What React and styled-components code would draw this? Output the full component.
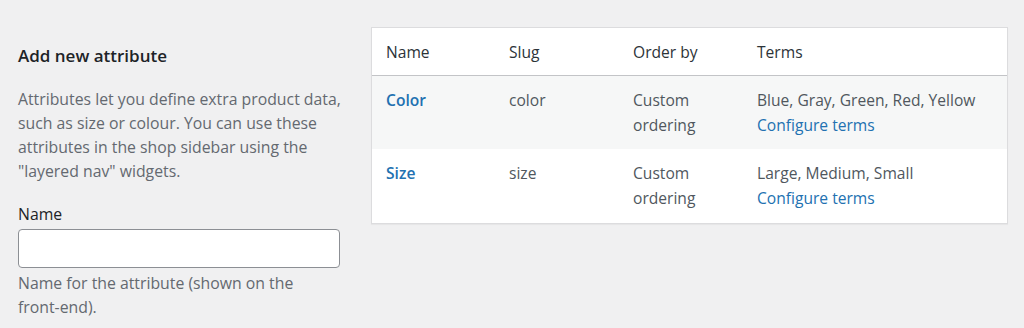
import React from 'react';
import styled, { createGlobalStyle } from 'styled-components';

const Global = createGlobalStyle`
  html, body { margin: 0; padding: 0; background: #f0f0f1; }
  body { font-family: "Open Sans", "Noto Sans", sans-serif; color: #3c434a; }
`;

const Page = styled.div`
  display: flex;
  align-items: flex-start;
  gap: 27px;
  padding: 27px 16px 0 18px;
  width: 1024px;
  height: 328px;
  box-sizing: border-box;
  overflow: hidden;
`;

const Side = styled.div`
  width: 326px;
  flex: none;
`;

const Heading = styled.h2`
  margin: 17px 0 0;
  font-size: 17px;
  font-weight: 600;
  line-height: 24px;
  color: #1d2327;
`;

const Note = styled.p`
  margin: ${p => p.$top || 0}px 0 0;
  font-size: 15.8px;
  line-height: 24px;
  color: #646970;
`;

const NoWrap = styled.span`
  white-space: nowrap;
`;

const Label = styled.label`
  display: block;
  margin-top: 19px;
  font-size: 15.8px;
  line-height: 24px;
  color: #1d2327;
`;

const Input = styled.input`
  display: block;
  box-sizing: border-box;
  width: 322px;
  height: 39px;
  margin-top: 3px;
  border: 1px solid #8c8f94;
  border-radius: 4px;
  background: #fff;
`;

const Table = styled.div`
  flex: 1;
  background: #fff;
  border: 1px solid #dcdcde;
  box-shadow: 0 1px 1px rgba(0, 0, 0, 0.04);
`;

const Row = styled.div`
  display: grid;
  grid-template-columns: 123px 124px 124px 1fr;
  padding: ${p => (p.$head ? '12px 14px 10px' : p.$alt ? '12px 14px 11px' : '12px 14px 12px')};
  background: ${p => (p.$alt ? '#f6f7f7' : '#fff')};
  border-bottom: ${p => (p.$head ? '1px solid #c3c4c7' : 'none')};
  font-size: 15.6px;
  line-height: 25px;
  color: ${p => (p.$head ? '#2c3338' : '#50575e')};
`;

const Cell = styled.div`
  padding-right: 8px;
`;

const Link = styled.a`
  color: #2271b1;
  text-decoration: none;
  font-weight: ${p => (p.$bold ? 600 : 400)};
  display: ${p => (p.$block ? 'block' : 'inline')};
`;

const rows = [
  { name: 'Color', slug: 'color', terms: 'Blue, Gray, Green, Red, Yellow' },
  { name: 'Size', slug: 'size', terms: 'Large, Medium, Small' },
];

export default function App() {
  return (
    <>
      <Global />
      <Page>
        <Side>
          <Heading>Add new attribute</Heading>
          <Note $top={19}>
            Attributes let you define extra product data, such as size or colour. You can use these
            attributes in the shop sidebar using the "layered nav" widgets.
          </Note>
          <Label htmlFor="attr-name">Name</Label>
          <Input id="attr-name" type="text" />
          <Note $top={3}>Name for the attribute (shown on the <NoWrap>front-end).</NoWrap></Note>
        </Side>
        <Table>
          <Row $head>
            <Cell>Name</Cell>
            <Cell>Slug</Cell>
            <Cell>Order by</Cell>
            <Cell>Terms</Cell>
          </Row>
          {rows.map((r, i) => (
            <Row key={r.slug} $alt={i % 2 === 0}>
              <Cell><Link href="#" $bold>{r.name}</Link></Cell>
              <Cell>{r.slug}</Cell>
              <Cell>Custom<br />ordering</Cell>
              <Cell>
                {r.terms}
                <Link href="#" $block>Configure terms</Link>
              </Cell>
            </Row>
          ))}
        </Table>
      </Page>
    </>
  );
}
